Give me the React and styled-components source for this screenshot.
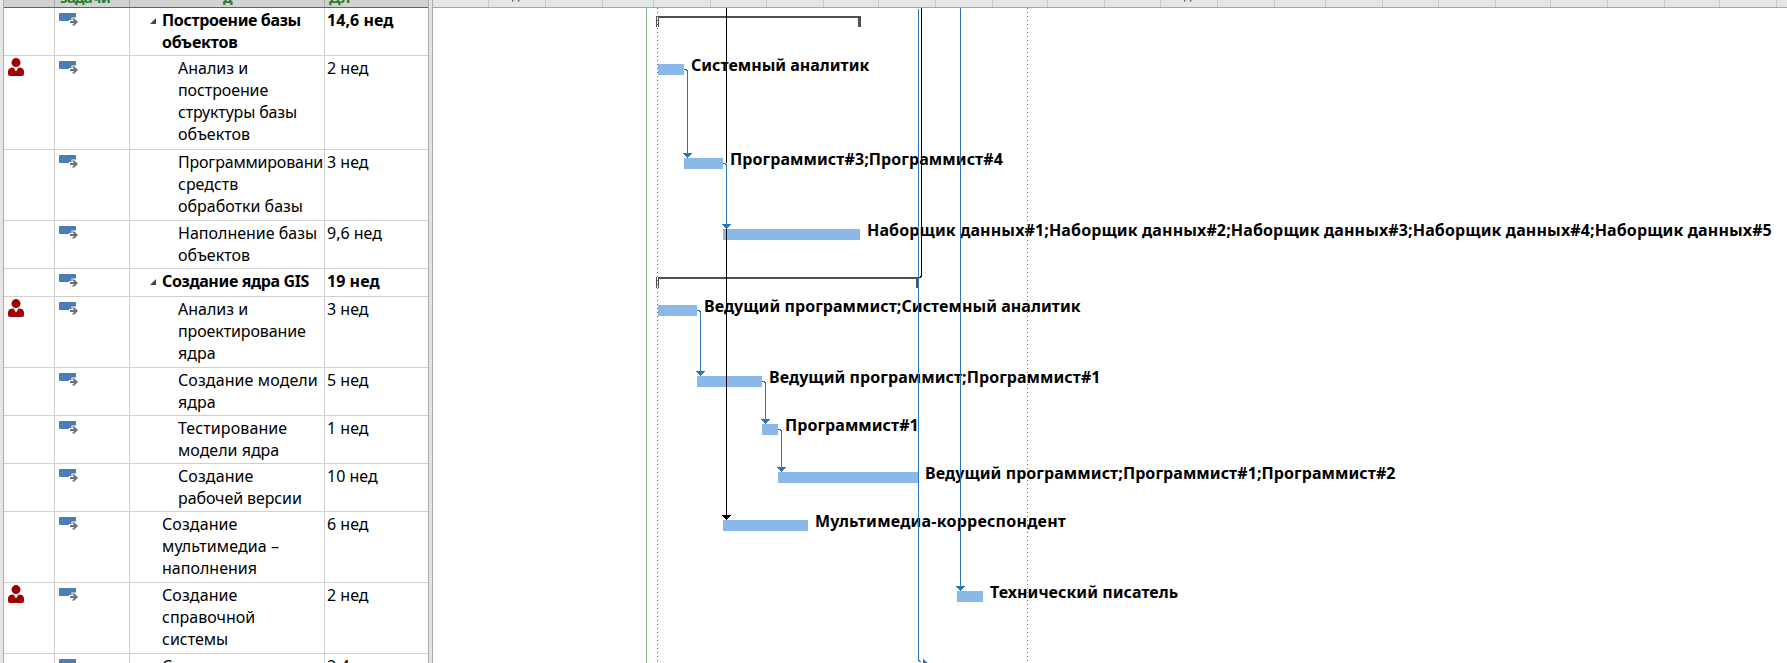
import React from 'react';
import styled, { createGlobalStyle, css } from 'styled-components';

const Global = createGlobalStyle`
  body { margin: 0; background: #fff; overflow: hidden; }
  * { box-sizing: border-box; }
`;

const Page = styled.div`
  display: flex;
  width: 1787px;
  height: 663px;
  overflow: hidden;
  background: #fff;
`;

const Gutter = styled.div`
  width: 3px;
  background: #e6e6e6;
`;

const Table = styled.div`
  display: flex;
  flex-direction: column;
  width: 426px;
  height: 663px;
  overflow: hidden;
  border-left: 1px solid #ababab;
  border-right: 1px solid #ababab;
  font-family: 'Noto Sans', 'Open Sans', sans-serif;
`;

const columns = css`
  display: grid;
  flex: none;
  grid-template-columns: 51px 75px 195px 1fr;
`;

const HeadRow = styled.div`
  ${columns}
  height: 8px;
  background: #d2d2d2;
  border-bottom: 1px solid #3f7a3f;
`;

const HeadCell = styled.div`
  display: flex;
  align-items: flex-end;
  overflow: hidden;
  height: 7px;
  padding-left: ${(p) => p.$pad || 0}px;
  border-right: 1px solid ${(p) => (p.$last ? 'transparent' : '#ababab')};
  color: #2f7d32;
  font-size: 15px;
  font-weight: 700;
  line-height: 19px;
  letter-spacing: ${(p) => p.$spacing || 0}px;
`;

const Row = styled.div`
  ${columns}
  height: ${(p) => p.$height}px;
  border-bottom: 1px solid #cfcfcf;
  font-weight: ${(p) => (p.$bold ? 700 : 400)};
`;

const Cell = styled.div`
  overflow: hidden;
  border-right: 1px solid ${(p) => (p.$last ? 'transparent' : '#cfcfcf')};
  padding: ${(p) => p.$pad || '0'};
`;

const TextLine = styled.div`
  color: #000;
  font-size: 16px;
  line-height: 22px;
  white-space: nowrap;
  letter-spacing: ${(p) => p.$spacing || 0}px;
`;

const NameCell = styled(Cell)`
  display: flex;
  padding: 1px 0 0 ${(p) => (p.$level === 2 ? 48 : 20)}px;
`;

const Toggle = styled.svg`
  flex: none;
  width: 6px;
  height: 6px;
  margin: 9px 6px 0 0;
`;

const Spacer = styled.span`
  flex: none;
  width: ${(p) => p.$w}px;
`;

const Icon = styled.svg`
  display: block;
`;

const Splitter = styled.div`
  width: 4px;
  background: #e3e3e3;
  border-right: 1px solid #ababab;
`;

const Chart = styled.div`
  position: relative;
  width: 1354px;
  height: 663px;
  overflow: hidden;
`;

const Scale = styled.div`
  display: flex;
  height: 8px;
  background: #e6e6e6;
  border-bottom: 1px solid #a6a6a6;
`;

const Tick = styled.div`
  display: flex;
  flex: none;
  align-items: flex-end;
  overflow: hidden;
  width: ${(p) => p.$w}px;
  padding-left: 23px;
  border-right: 1px solid #cacaca;
  color: #444;
  font: 12px/23px 'Noto Sans', sans-serif;
`;

const Canvas = styled.svg`
  position: absolute;
  left: 0;
  top: 0;
`;

const Label = styled.div`
  position: absolute;
  left: ${(p) => p.$x}px;
  top: ${(p) => p.$y}px;
  color: #000;
  font: 700 16px/22px 'Noto Sans', 'Open Sans', sans-serif;
  letter-spacing: ${(p) => p.$spacing}px;
  white-space: nowrap;
`;

const rows = [
  { h: 48, bold: true, level: 1, toggle: true, name: [['Построение базы', -0.36], ['объектов', -0.2]], time: '14,6 нед' },
  { h: 94, person: true, level: 2, name: [['Анализ и', 0], ['построение', -0.1], ['структуры базы', -0.17], ['объектов', 0]], time: '2 нед' },
  { h: 71, level: 2, name: [['Программировани', -0.2], ['средств', 0], ['обработки базы', 0]], time: '3 нед' },
  { h: 48, level: 2, name: [['Наполнение базы', 0], ['объектов', 0]], time: '9,6 нед' },
  { h: 28, bold: true, level: 1, toggle: true, name: [['Создание ядра GIS', -0.37]], time: '19 нед' },
  { h: 71, person: true, level: 2, name: [['Анализ и', 0], ['проектирование', -0.12], ['ядра', 0]], time: '3 нед' },
  { h: 48, level: 2, name: [['Создание модели', 0.1], ['ядра', 0]], time: '5 нед' },
  { h: 48, level: 2, name: [['Тестирование', 0.1], ['модели ядра', 0]], time: '1 нед' },
  { h: 48, level: 2, name: [['Создание', 0.1], ['рабочей версии', -0.1]], time: '10 нед' },
  { h: 71, level: 1, name: [['Создание', 0.1], ['мультимедиа –', 0.1], ['наполнения', 0]], time: '6 нед' },
  { h: 71, person: true, level: 1, name: [['Создание', 0.1], ['справочной', 0], ['системы', 0]], time: '2 нед' },
  { h: 48, level: 1, name: [['Создание', 0.1]], time: '2,4 нед' },
];

const bars = [
  [658, 684, 64], [684, 723, 158], [723, 860, 229], [658, 697, 305], [697, 762, 376],
  [762, 778, 424], [778, 918, 472], [723, 808, 520], [957, 983, 591],
];

const labels = [
  [691, 54, 'Системный аналитик', 0],
  [730, 148, 'Программист#3;Программист#4', 0.08],
  [867, 219, 'Наборщик данных#1;Наборщик данных#2;Наборщик данных#3;Наборщик данных#4;Наборщик данных#5', 0.125],
  [704, 295, 'Ведущий программист;Системный аналитик', 0.05],
  [769, 366, 'Ведущий программист;Программист#1', 0.06],
  [785, 414, 'Программист#1', 0.05],
  [925, 462, 'Ведущий программист;Программист#1;Программист#2', 0.07],
  [815, 510, 'Мультимедиа-корреспондент', 0.23],
  [990, 581, 'Технический писатель', 0.05],
];

const BLUE = '#2e75b6';
const ticks = [56, 57, 57, 51, 57, 56, 57, 55, 57, 57, 55, 57, 56, 57, 57, 51, 57, 56, 57, 55, 57, 57, 55, 57];
const monthTicks = [1, 13];

const TaskIcon = () => (
  <Icon width="20" height="13" viewBox="0 0 20 13">
    <rect width="17" height="8" rx="0.8" fill="#4a7db3" />
    <path d="M10 7h2.500V4.500H19V12H10z" fill="#fff" />
    <path d="M11 8h4L12.800 5.500h2.600L19 9l-3.600 3.500h-2.600L15 10h-4z" fill="#707070" />
  </Icon>
);

const PersonIcon = () => (
  <Icon width="16" height="18" viewBox="0 0 16 18">
    <circle cx="8" cy="4.600" r="4.500" fill="#a00000" />
    <path d="M0 16v-2.500C0 11 2 9.600 5.500 9.600L8 13.500l2.500-3.900C14 9.600 16 11 16 13.500V16c0 1.300-1 2-2 2H2c-1 0-2-.7-2-2z" fill="#a00000" />
  </Icon>
);

const Arrow = ({ x, y, color = BLUE }) => (
  <path d={`M${x - 4} ${y}h9v1h-1v1h-1v1h-1v1h-1v1h-1v-1h-1v-1h-1v-1h-1v-1h-1z`} fill={color} />
);

const Link = ({ x1, x, y1, y2 }) => (
  <>
    <path d={`M${x1} ${y1 + 0.5}h${x - x1 - 1}l1.500 1.500V${y2}`} fill="none" stroke={BLUE} />
    <Arrow x={x} y={y2} />
  </>
);

const Summary = ({ x1, x2, y }) => (
  <>
    <path d={`M${x1} ${y}H${x2}v11h-3v-9H${x1 + 3}v9h-3z`} fill="#505050" />
    <path d={`M${x1 + 1} ${y}h1v11h-1z`} fill="#fff" />
  </>
);

export default function App() {
  return (
    <Page>
      <Global />
      <Gutter />
      <Table>
        <HeadRow>
          <HeadCell />
          <HeadCell $pad={5} $spacing={-0.8}>задачи</HeadCell>
          <HeadCell $pad={93}>д</HeadCell>
          <HeadCell $pad={4} $last>Дл</HeadCell>
        </HeadRow>
        {rows.map((r, i) => (
          <Row key={i} $height={r.h} $bold={r.bold}>
            <Cell $pad="2px 0 0 4px">{r.person && <PersonIcon />}</Cell>
            <Cell $pad="5px 0 0 4px"><TaskIcon /></Cell>
            <NameCell $level={r.level}>
              {r.toggle ? (
                <Toggle viewBox="0 0 6 6"><path d="M6 0v6H0z" fill="#444" /></Toggle>
              ) : (
                r.level === 1 && <Spacer $w={12} />
              )}
              <div>{r.name.map(([t, s]) => <TextLine key={t} $spacing={s}>{t}</TextLine>)}</div>
            </NameCell>
            <Cell $pad="1px 0 0 2px" $last><TextLine $spacing={r.bold ? 0.05 : 0}>{r.time}</TextLine></Cell>
          </Row>
        ))}
      </Table>
      <Splitter />
      <Chart>
        <Scale>{ticks.map((w, i) => <Tick key={i} $w={w}>{monthTicks.includes(i) && 'д'}</Tick>)}</Scale>
        {labels.map(([x, y, t, s]) => <Label key={t} $x={x - 433} $y={y} $spacing={s}>{t}</Label>)}
        <Canvas width="1354" height="663" viewBox="433 0 1354 663" shapeRendering="crispEdges">
          <path d="M646.500 8V663" stroke="#82b386" />
          <Summary x1={656} x2={861} y={16} />
          <Summary x1={656} x2={919} y={277} />
          {bars.map(([a, b, y]) => <rect key={y} x={a} y={y} width={b - a} height="11" fill="#8ab8e8" />)}
          <path d="M657.500 8V663M1027.500 8V663" stroke="#6a6a6a" strokeDasharray="1 3" />
          <path d="M726.500 8V163M726.500 229V515" stroke="#000" />
          <path d="M921.500 8V276L920 277.500H918" stroke="#000" fill="none" />
          <path d="M918.500 9V660l2 2M960.500 8V586" stroke={BLUE} fill="none" />
          <Link x1={684} x={687} y1={69} y2={153} />
          <Link x1={723} x={726} y1={163} y2={224} />
          <Link x1={697} x={700} y1={310} y2={371} />
          <Link x1={762} x={765} y1={381} y2={419} />
          <Link x1={778} x={781} y1={429} y2={467} />
          <Arrow x={726} y={515} color="#000" />
          <Arrow x={960} y={586} />
          <path d="M923 658v5h4z" fill={BLUE} />
        </Canvas>
      </Chart>
    </Page>
  );
}
